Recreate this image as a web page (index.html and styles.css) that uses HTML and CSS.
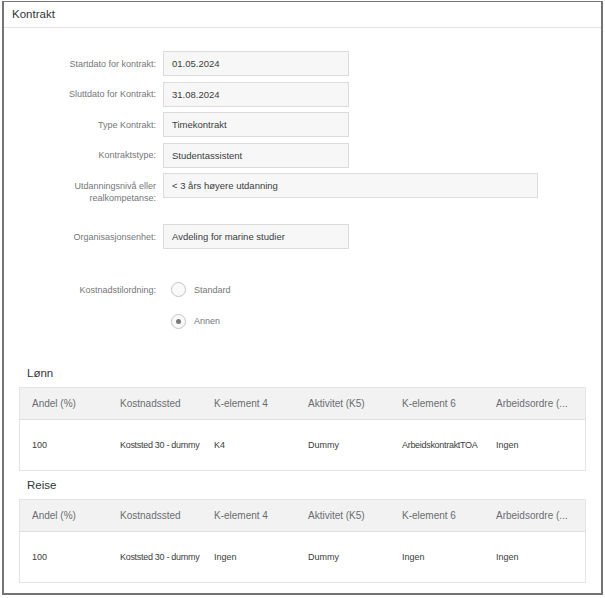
FILE: index.html
```html
<!DOCTYPE html>
<html lang="no">
<head>
    <meta charset="UTF-8">
    <meta name="viewport" content="width=device-width, initial-scale=1.0">
    <title>Kontrakt</title>
    <link rel="stylesheet" href="styles.css">
</head>
<body>

    <div class="panel">
        <div class="panel-header">Kontrakt</div>

        <div class="form">
            <div class="row">
                <label class="label">Startdato for kontrakt:</label>
                <div class="field">01.05.2024</div>
            </div>
            <div class="row">
                <label class="label">Sluttdato for Kontrakt:</label>
                <div class="field">31.08.2024</div>
            </div>
            <div class="row">
                <label class="label">Type Kontrakt:</label>
                <div class="field">Timekontrakt</div>
            </div>
            <div class="row">
                <label class="label">Kontraktstype:</label>
                <div class="field">Studentassistent</div>
            </div>
            <div class="row row-top">
                <label class="label label-wrap">Utdanningsnivå eller<br>realkompetanse:</label>
                <div class="field field-wide">&lt; 3 års høyere utdanning</div>
            </div>
            <div class="row row-spaced">
                <label class="label">Organisasjonsenhet:</label>
                <div class="field">Avdeling for marine studier</div>
            </div>
            <div class="row radio-row radio-first">
                <label class="label">Kostnadstilordning:</label>
                <div class="radio"><span class="radio-circle"></span>Standard</div>
            </div>
            <div class="row radio-row">
                <span class="label"></span>
                <div class="radio"><span class="radio-circle checked"></span>Annen</div>
            </div>
        </div>

        <div class="tables">
            <h3 class="section-title">Lønn</h3>
            <div class="grid">
                <div class="grid-row grid-head">
                    <div>Andel (%)</div>
                    <div>Kostnadssted</div>
                    <div>K-element 4</div>
                    <div>Aktivitet (K5)</div>
                    <div>K-element 6</div>
                    <div>Arbeidsordre (...</div>
                </div>
                <div class="grid-row grid-data">
                    <div>100</div>
                    <div class="tight">Koststed 30 - dummy</div>
                    <div>K4</div>
                    <div>Dummy</div>
                    <div class="tight">ArbeidskontraktTOA</div>
                    <div>Ingen</div>
                </div>
            </div>

            <h3 class="section-title">Reise</h3>
            <div class="grid">
                <div class="grid-row grid-head">
                    <div>Andel (%)</div>
                    <div>Kostnadssted</div>
                    <div>K-element 4</div>
                    <div>Aktivitet (K5)</div>
                    <div>K-element 6</div>
                    <div>Arbeidsordre (...</div>
                </div>
                <div class="grid-row grid-data">
                    <div>100</div>
                    <div class="tight">Koststed 30 - dummy</div>
                    <div>Ingen</div>
                    <div>Dummy</div>
                    <div>Ingen</div>
                    <div>Ingen</div>
                </div>
            </div>
        </div>
    </div>

</body>
</html>
```

FILE: styles.css
```css
* {
    box-sizing: border-box;
}
body {
    font-family: "Liberation Sans", Arial, sans-serif;
    background-color: #fff;
    color: #32363a;
    margin: 0;
    padding: 0;
}
.panel {
    width: 601px;
    height: 594px;
    margin: 1px 0 0 2px;
    border: 2px solid #747474;
    border-top-width: 1px;
    background-color: #fff;
}
.panel-header {
    height: 26px;
    line-height: 25px;
    padding-left: 8px;
    font-size: 11.5px;
    color: #32363a;
    border-bottom: 1px solid #e4e4e4;
}
.form {
    display: flex;
    flex-direction: column;
    gap: 5.5px;
    padding-top: 23px;
}
.row {
    display: flex;
    align-items: center;
    gap: 7px;
}
.row-top {
    align-items: flex-start;
}
.row-spaced {
    margin-top: 14.5px;
}
.label {
    width: 152px;
    flex: none;
    text-align: right;
    font-size: 9px;
    color: #74777a;
}
.label-wrap {
    padding-top: 7px;
    line-height: 12px;
}
.field {
    width: 186px;
    height: 25px;
    line-height: 23px;
    padding-left: 8px;
    font-size: 9.5px;
    background-color: #f7f7f7;
    border: 1px solid #dcdcdc;
    color: #3a3d40;
}
.field-wide {
    width: 375px;
}
.radio-row {
    height: 26px;
}
.radio-first {
    margin-top: 22px;
}
.radio {
    display: flex;
    align-items: center;
    gap: 8px;
    padding-left: 8px;
    font-size: 9px;
    color: #74777a;
}
.radio-circle {
    width: 15px;
    height: 15px;
    border: 1px solid #c4c4c4;
    border-radius: 50%;
    background-color: #fafafa;
    display: flex;
    align-items: center;
    justify-content: center;
}
.radio-circle.checked::after {
    content: "";
    width: 5px;
    height: 5px;
    border-radius: 50%;
    background-color: #7a7a7a;
}
.tables {
    padding: 25px 15px 0 15px;
}
.section-title {
    margin: 0;
    height: 28px;
    line-height: 28px;
    padding-left: 8px;
    font-size: 11.5px;
    font-weight: normal;
    color: #32363a;
}
.grid {
    border: 1px solid #e4e4e4;
}
.grid-row {
    display: grid;
    grid-template-columns: 100px 94px 94px 94px 94px 1fr;
    align-items: center;
    white-space: nowrap;
}
.grid-row > div:first-child {
    padding-left: 12px;
}
.grid-head {
    height: 32px;
    background-color: #f2f2f2;
    border-bottom: 1px solid #e0e0e0;
    font-size: 10px;
    color: #6a6d70;
}
.grid-data {
    height: 50px;
    font-size: 9px;
    color: #3a3d40;
}
.tight {
    letter-spacing: -0.3px;
}
```
